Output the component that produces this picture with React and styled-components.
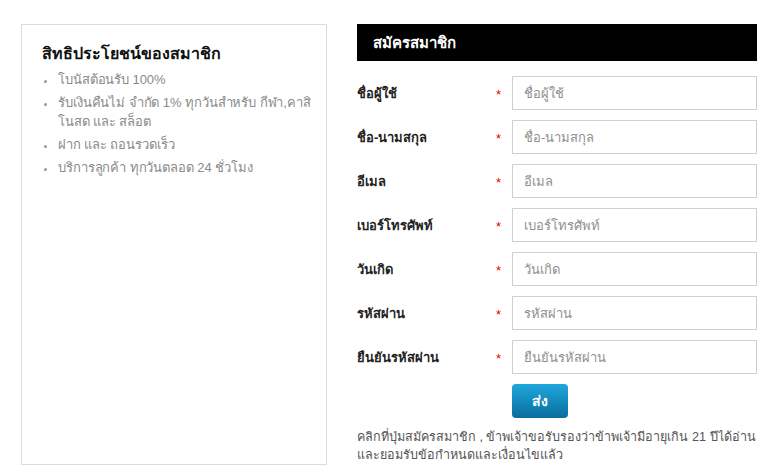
import React from "react";
import styled, { createGlobalStyle } from "styled-components";

const Global = createGlobalStyle`
  html, body { margin: 0; padding: 0; background: #fff; }
  body { font-family: Tahoma, "Liberation Sans", "DejaVu Sans", sans-serif; }
  * { box-sizing: border-box; }
`;

const Page = styled.div`
  display: flex;
  align-items: stretch;
  gap: 30px;
  padding: 24px 9px 8px 21px;
  width: 766px;
  height: 472px;
`;

const Benefits = styled.aside`
  width: 306px;
  height: 441px;
  border: 1px solid #dcdcdc;
  padding: 17px 20px;
`;

const BenefitsTitle = styled.h2`
  margin: 0 0 4px;
  font-size: 16px;
  font-weight: bold;
  color: #111;
  line-height: 24px;
`;

const List = styled.ul`
  margin: 0;
  padding: 0 0 0 15px;
  color: #8a8a8a;
  font-size: 13px;
  line-height: 19px;
`;

const Item = styled.li`
  margin-bottom: 4px;
  padding-left: 1px;
  white-space: ${(p) => (p.$nowrap ? "nowrap" : "normal")};
  letter-spacing: -0.1px;
  &::marker { color: #999; font-size: 11px; }
`;

const Signup = styled.section`
  width: 400px;
  display: flex;
  flex-direction: column;
`;

const Header = styled.div`
  height: 38px;
  background: #000;
  color: #fff;
  font-size: 15px;
  font-weight: bold;
  display: flex;
  align-items: center;
  padding-left: 16px;
  margin-bottom: 15px;
`;

const Fields = styled.div`
  display: flex;
  flex-direction: column;
  gap: 10px;
`;

const Row = styled.div`
  display: grid;
  grid-template-columns: 139px 16px 245px;
  align-items: center;
  height: 34px;
`;

const Label = styled.label`
  font-size: 13px;
  font-weight: bold;
  color: #222;
`;

const Star = styled.span`
  color: #e00;
  font-size: 13px;
  line-height: 1;
  padding-top: 2px;
`;

const Input = styled.input`
  height: 34px;
  width: 245px;
  border: 1px solid #cfcfcf;
  padding: 0 11px;
  font-family: inherit;
  font-size: 13px;
  color: #333;
  outline: none;
  &::placeholder { color: #8f8f8f; }
`;

const Actions = styled.div`
  padding-left: 155px;
  margin-top: 10px;
`;

const Submit = styled.button`
  width: 56px;
  height: 34px;
  border: none;
  border-radius: 4px;
  background: linear-gradient(#1ea7dc, #0a6d9f);
  color: #fff;
  font-family: inherit;
  font-size: 14px;
  font-weight: bold;
  cursor: pointer;
`;

const Note = styled.p`
  margin: 10px 0 0;
  font-size: 12.6px;
  line-height: 18px;
  color: #555;
  white-space: nowrap;
`;

const fields = [
  "ชื่อผู้ใช้",
  "ชื่อ-นามสกุล",
  "อีเมล",
  "เบอร์โทรศัพท์",
  "วันเกิด",
  "รหัสผ่าน",
  "ยืนยันรหัสผ่าน",
];

export default function App() {
  return (
    <>
      <Global />
      <Page>
        <Benefits>
          <BenefitsTitle>สิทธิประโยชน์ของสมาชิก</BenefitsTitle>
          <List>
            <Item>โบนัสต้อนรับ 100%</Item>
            <Item $nowrap>
              รับเงินคืนไม่ จำกัด 1% ทุกวันสำหรับ กีฬา,คาสิ
              <br />
              โนสด และ สล็อต
            </Item>
            <Item>ฝาก และ ถอนรวดเร็ว</Item>
            <Item>บริการลูกค้า ทุกวันตลอด 24 ชั่วโมง</Item>
          </List>
        </Benefits>
        <Signup>
          <Header>สมัครสมาชิก</Header>
          <Fields>
            {fields.map((f) => (
              <Row key={f}>
                <Label>{f}</Label>
                <Star>*</Star>
                <Input placeholder={f} type="text" />
              </Row>
            ))}
          </Fields>
          <Actions>
            <Submit>ส่ง</Submit>
          </Actions>
          <Note>
            คลิกที่ปุ่มสมัครสมาชิก , ข้าพเจ้าขอรับรองว่าข้าพเจ้ามีอายุเกิน 21 ปีได้อ่าน
            <br />
            และยอมรับข้อกำหนดและเงื่อนไขแล้ว
          </Note>
        </Signup>
      </Page>
    </>
  );
}
